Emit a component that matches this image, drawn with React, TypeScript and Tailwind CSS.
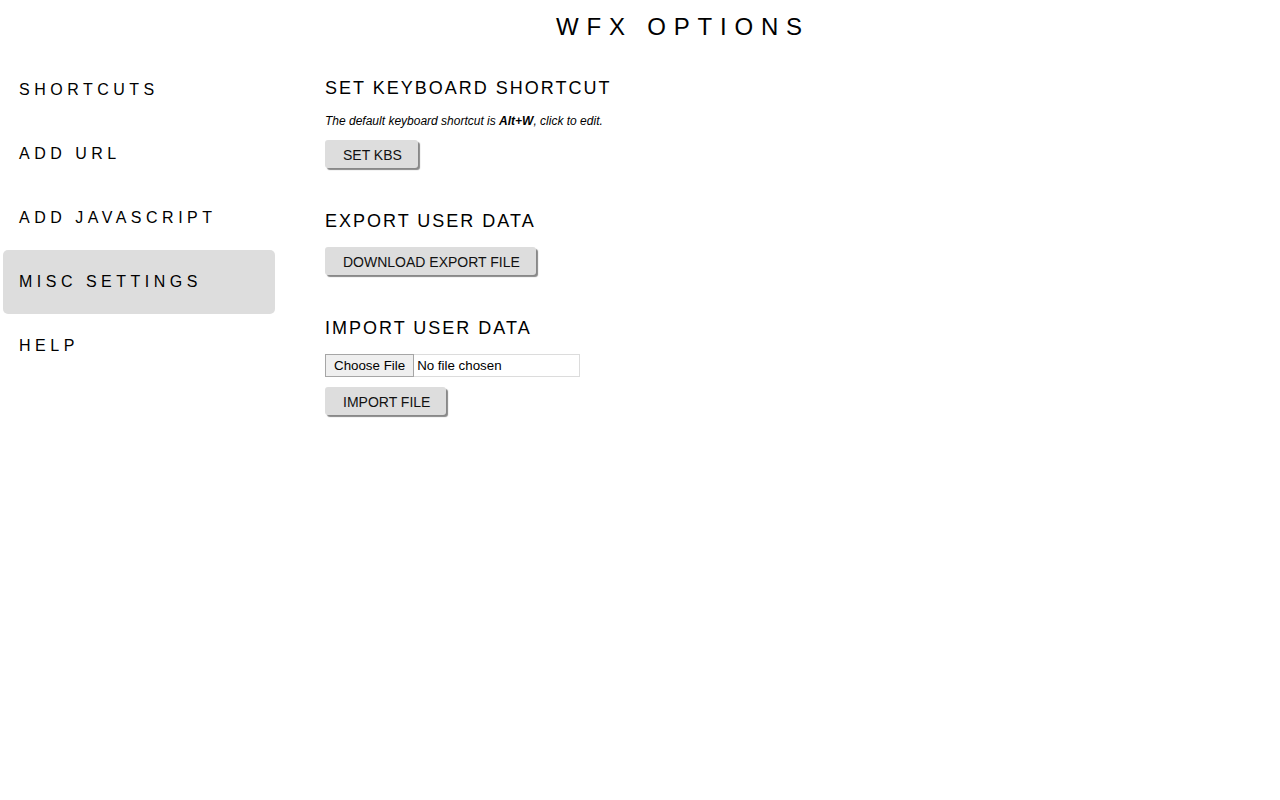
const NAV = ["SHORTCUTS", "ADD URL", "ADD JAVASCRIPT", "MISC SETTINGS", "HELP"];

function GreyButton({ label }: { label: string }) {
  return (
    <button className="block bg-[#dddddd] text-[14px] leading-[16px] text-[#111] pl-[18px] pr-[16px] pt-[7px] pb-[5px] rounded-[3px] shadow-[2px_2px_1px_#888]">
      {label}
    </button>
  );
}

export default function App() {
  const active = "MISC SETTINGS";

  return (
    <div className="min-h-[800px] bg-white text-black font-['Liberation_Sans',Arial,sans-serif]">
      {/* header */}
      <h1 className="pt-[11px] pl-[86px] text-center text-[24px] leading-[32px] tracking-[7.8px] font-normal">
        WFX OPTIONS
      </h1>

      <div className="flex">
        {/* sidebar */}
        <nav className="ml-[3px] mt-[15px] w-[272px] shrink-0">
          {NAV.map((item) => (
            <div
              key={item}
              className={
                "h-[64px] flex items-center pl-[16px] rounded-[5px] text-[16px] tracking-[4.5px] " +
                (item === active ? "bg-[#dddddd]" : "")
              }
            >
              {item}
            </div>
          ))}
        </nav>

        {/* main */}
        <main className="ml-[50px] mt-[34px]">
          <h2 className="text-[18px] leading-[22px] tracking-[2px] font-normal">SET KEYBOARD SHORTCUT</h2>
          <p className="mt-[15px] text-[12px] leading-[14px] italic">
            The default keyboard shortcut is <b>Alt+W</b>, click to edit.
          </p>
          <div className="mt-[12px]">
            <GreyButton label="SET KBS" />
          </div>

          <h2 className="mt-[42px] text-[18px] leading-[22px] tracking-[2px] font-normal">EXPORT USER DATA</h2>
          <div className="mt-[15px]">
            <GreyButton label="DOWNLOAD EXPORT FILE" />
          </div>

          <h2 className="mt-[42px] text-[18px] leading-[22px] tracking-[2px] font-normal">IMPORT USER DATA</h2>
          <div className="mt-[15px] flex items-center w-[255px] h-[23px] border border-[#dcdcdc] text-[13.33px]">
            <span className="flex items-center px-[8px] bg-[#efefef] border border-[#a6a6a6] -ml-px -mt-px self-start h-[23px]">
              Choose File
            </span>
            <span className="ml-[3px]">No file chosen</span>
          </div>
          <div className="mt-[10px]">
            <GreyButton label="IMPORT FILE" />
          </div>
        </main>
      </div>
    </div>
  );
}
